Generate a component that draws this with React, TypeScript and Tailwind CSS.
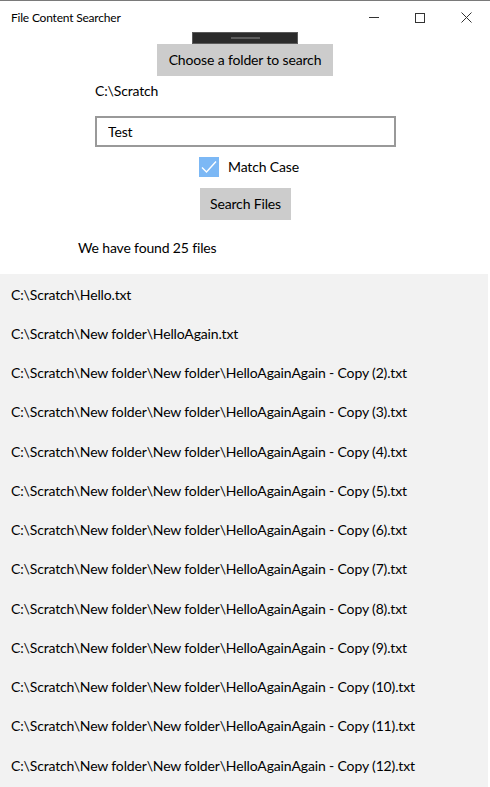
import { useState } from 'react';

const files = [
  'C:\\Scratch\\Hello.txt',
  'C:\\Scratch\\New folder\\HelloAgain.txt',
  ...[2, 3, 4, 5, 6, 7, 8, 9, 10, 11, 12].map(
    (n) => `C:\\Scratch\\New folder\\New folder\\HelloAgainAgain - Copy (${n}).txt`
  ),
];

export default function App() {
  const [query, setQuery] = useState('Test');
  const [matchCase, setMatchCase] = useState(true);

  return (
    <div
      className="w-[490px] h-[787px] overflow-hidden bg-white text-black border-t border-[#7a7a7a] flex flex-col tracking-[-0.15px]"
      style={{ fontFamily: 'Lato, "Noto Sans", sans-serif' }}
    >
      {/* Title bar */}
      <div className="h-[31px] shrink-0 flex items-center pl-[11px] pt-[2px]">
        <span className="text-[12px] flex-1 leading-none tracking-[-0.2px]">File Content Searcher</span>
        <div className="flex items-center h-full">
          <div className="w-[46px] h-full flex items-center justify-center">
            <div className="w-[10px] h-px bg-[#333]" />
          </div>
          <div className="w-[46px] h-full flex items-center justify-center">
            <div className="w-[10px] h-[10px] border border-[#333]" />
          </div>
          <div className="w-[46px] h-full flex items-center justify-center mr-[1px]">
            <svg width="11" height="11" viewBox="0 0 11 11" stroke="#333" strokeWidth="1">
              <path d="M0.5 0.5 L10.5 10.5 M10.5 0.5 L0.5 10.5" />
            </svg>
          </div>
        </div>
      </div>

      {/* Form */}
      <div className="flex flex-col items-center">
        <div className="w-[106px] h-[12px] bg-[#2b2b2b] border border-[#5a5a5a] flex items-center justify-center">
          <div className="w-[29px] h-[2px] bg-[#5c5c5c]" />
        </div>
        <button className="h-[32px] w-[176px] bg-[#cccccc] text-[14px] leading-none">
          Choose a folder to search
        </button>
      </div>

      <div className="pl-[95px] mt-[2px] text-[14px] h-[24px] flex items-center">C:\Scratch</div>

      <div className="pl-[95px] mt-[14px] h-[31px]">
        <input
          value={query}
          onChange={(e) => setQuery(e.target.value)}
          className="w-[301px] h-[31px] border-2 border-[#999999] px-[11px] text-[14px] outline-none"
        />
      </div>

      <div className="flex mt-[10px] pl-[199px] h-[20px]">
        <label className="flex items-center gap-[9px] text-[14px] h-[20px] leading-none cursor-pointer">
          <span
            onClick={() => setMatchCase(!matchCase)}
            className={`w-[20px] h-[20px] flex items-center justify-center ${matchCase ? 'bg-[#7cb8f5]' : 'border-2 border-[#333]'}`}
          >
            {matchCase && (
              <svg width="16" height="14" viewBox="0 0 16 14" fill="none" stroke="white" strokeWidth="1.4">
                <path d="M1 7.5 L5.5 12 L15 1.5" />
              </svg>
            )}
          </span>
          Match Case
        </label>
      </div>

      <div className="flex mt-[11px] pl-[200px]">
        <button className="h-[32px] w-[91px] bg-[#cccccc] text-[14px] leading-none">Search Files</button>
      </div>

      <div className="pl-[78px] mt-[15px] text-[14px] h-[24px] flex items-center">We have found 25 files</div>

      {/* Results */}
      <div className="mt-[15px] w-[488px] flex-1 bg-[#f2f2f2]">
        {files.map((f) => (
          <div key={f} className="h-[39.25px] flex items-center pl-[11px] pt-[1px] text-[14px] whitespace-nowrap">
            {f}
          </div>
        ))}
      </div>
    </div>
  );
}
